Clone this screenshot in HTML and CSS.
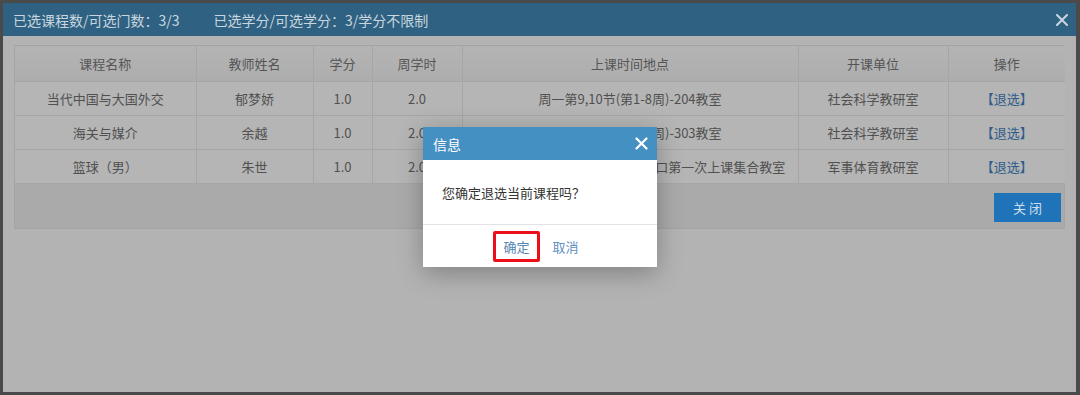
FILE: index.html
```html
<!DOCTYPE html>
<html lang="zh-CN">
<head>
<meta charset="utf-8">
<title>已选课程</title>
<link rel="stylesheet" href="styles.css">
</head>
<body>
<div class="dialog">
  <div class="dialog-title">
    <span>已选课程数/可选门数：3/3</span>
    <span class="title-second">已选学分/可选学分：3/学分不限制</span>
    <svg class="close-main" width="12" height="12" viewBox="0 0 12 12"><path d="M1 1 L11 11 M11 1 L1 11" stroke="#c9d6df" stroke-width="2" stroke-linecap="round"/></svg>
  </div>
  <div class="dialog-body">
    <div class="grid">
      <table class="course-table">
        <colgroup>
          <col class="c1"><col class="c2"><col class="c3"><col class="c4"><col class="c5"><col class="c6"><col class="c7">
        </colgroup>
        <thead>
          <tr><th>课程名称</th><th>教师姓名</th><th>学分</th><th>周学时</th><th>上课时间地点</th><th>开课单位</th><th>操作</th></tr>
        </thead>
        <tbody>
          <tr><td>当代中国与大国外交</td><td>郁梦娇</td><td>1.0</td><td>2.0</td><td>周一第9,10节(第1-8周)-204教室</td><td>社会科学教研室</td><td><a class="drop">【退选】</a></td></tr>
          <tr><td>海关与媒介</td><td>余越</td><td>1.0</td><td>2.0</td><td>周三第9,10节(第1-8周)-303教室</td><td>社会科学教研室</td><td><a class="drop">【退选】</a></td></tr>
          <tr><td>篮球（男）</td><td>朱世</td><td>1.0</td><td>2.0</td><td>周四第5,6节(第1-8周)-体育馆门口第一次上课集合教室</td><td>军事体育教研室</td><td><a class="drop">【退选】</a></td></tr>
        </tbody>
      </table>
      <div class="grid-footer">
        <button class="btn-close">关 闭</button>
      </div>
    </div>
  </div>
</div>

<div class="confirm">
  <div class="confirm-title">
    <span>信息</span>
    <svg class="close-confirm" width="13" height="13" viewBox="0 0 13 13"><path d="M1.5 1.5 L11.5 11.5 M11.5 1.5 L1.5 11.5" stroke="#ffffff" stroke-width="2.2" stroke-linecap="round"/></svg>
  </div>
  <div class="confirm-body">您确定退选当前课程吗？</div>
  <div class="confirm-footer">
    <a class="btn-ok">确定</a>
    <a class="btn-cancel">取消</a>
  </div>
</div>
</body>
</html>
```
FILE: styles.css
```css
* { box-sizing: border-box; }
html, body { margin: 0; }
body {
  width: 1080px;
  height: 395px;
  overflow: hidden;
  background: #4a4a4a;
  padding: 3px 4px 3px 3px;
  font-family: "Noto Sans CJK SC", "Noto Sans", sans-serif;
  position: relative;
}
.dialog {
  height: 389px;
  background: #b3b3b3;
  display: flex;
  flex-direction: column;
}
.dialog-title {
  height: 33px;
  flex: none;
  background: #2f6282;
  color: #c9d6df;
  font-size: 14px;
  display: flex;
  align-items: center;
  padding: 0 8px 0 10px;
}
.title-second { margin-left: 34px; }
.close-main { margin-left: auto; }
.dialog-body {
  padding: 9px 11px 0 11px;
}
.grid {
  border: 1px solid #a4a4a4;
  background: #aaaaaa;
}
.course-table {
  width: 100%;
  table-layout: fixed;
  border-collapse: collapse;
  font-size: 13px;
  color: #505050;
}
.c1 { width: 181px; }
.c2 { width: 117px; }
.c3 { width: 59px; }
.c4 { width: 90px; }
.c5 { width: 336px; }
.c6 { width: 150px; }
.c7 { width: 117px; }
.course-table th,
.course-table td {
  border: 1px solid #a6a6a6;
  text-align: center;
  white-space: nowrap;
  overflow: hidden;
  padding: 0;
}
.course-table tr > :first-child { border-left: none; }
.course-table tr > :last-child { border-right: none; }
.course-table thead tr > * { border-top: none; }
.course-table th {
  height: 35px;
  font-weight: normal;
  color: #555555;
  background: linear-gradient(#b4b4b4, #adadad);
}
.course-table td {
  height: 34px;
  background: #b5b5b5;
}
.drop { color: #2f5c8a; }
.grid-footer {
  height: 44px;
  display: flex;
  justify-content: flex-end;
  align-items: flex-start;
  padding: 9px 3px 0 0;
}
.btn-close {
  width: 67px;
  height: 29px;
  border: none;
  background: #1f74b9;
  color: #cfdfec;
  font-family: inherit;
  font-size: 13px;
  padding: 0;
}
.confirm {
  position: absolute;
  left: 423px;
  top: 127px;
  width: 234px;
  background: #ffffff;
  box-shadow: 0 6px 24px rgba(0, 0, 0, 0.28);
}
.confirm-title {
  height: 33px;
  background: #4590c3;
  color: #ffffff;
  font-size: 14px;
  display: flex;
  align-items: center;
  justify-content: space-between;
  padding: 0 9px 0 10px;
}
.confirm-body {
  height: 64px;
  display: flex;
  align-items: center;
  padding-left: 19px;
  font-size: 13px;
  color: #333333;
}
.confirm-footer {
  height: 43px;
  border-top: 1px solid #e3e3e3;
  display: flex;
  justify-content: center;
  align-items: center;
  gap: 13px;
  padding-right: 8px;
  font-size: 13px;
}
.btn-ok {
  height: 31px;
  padding: 0 7px;
  border: 3px solid #ec0f19;
  border-radius: 2px;
  display: flex;
  align-items: center;
  color: #5585b2;
}
.btn-cancel { color: #5f90bf; }
```
